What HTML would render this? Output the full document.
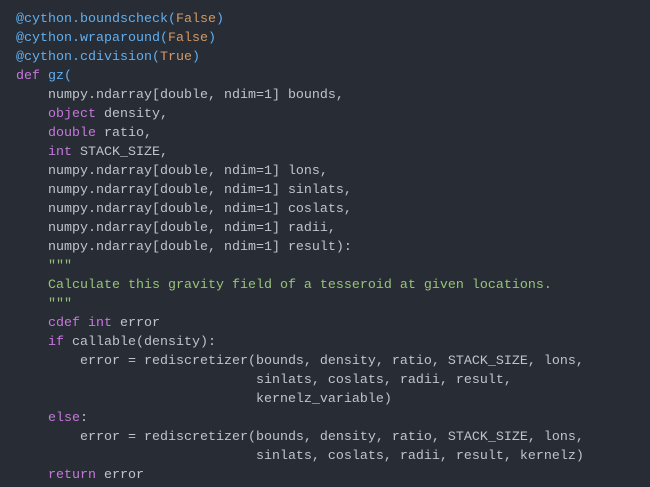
<!DOCTYPE html>
<html><head><style>
html,body{margin:0;padding:0;background:#282c34;width:650px;height:487px;overflow:hidden}
pre{margin:0;padding:10px 0 0 16px;font-family:"Liberation Mono",monospace;font-size:13.33px;line-height:19px;color:#bfc4cc}
.d{color:#61afef}.n{color:#d19a66}.k{color:#c678dd}.s{color:#98c379}.f{color:#61afef}
</style></head><body><pre><span class="d">@cython.boundscheck(</span><span class="n">False</span><span class="d">)</span>
<span class="d">@cython.wraparound(</span><span class="n">False</span><span class="d">)</span>
<span class="d">@cython.cdivision(</span><span class="n">True</span><span class="d">)</span>
<span class="k">def</span> <span class="f">gz(</span>
    numpy.ndarray[double, ndim=1] bounds,
    <span class="k">object</span> density,
    <span class="k">double</span> ratio,
    <span class="k">int</span> STACK_SIZE,
    numpy.ndarray[double, ndim=1] lons,
    numpy.ndarray[double, ndim=1] sinlats,
    numpy.ndarray[double, ndim=1] coslats,
    numpy.ndarray[double, ndim=1] radii,
    numpy.ndarray[double, ndim=1] result):
    <span class="s">"""</span>
<span class="s">    Calculate this gravity field of a tesseroid at given locations.</span>
<span class="s">    """</span>
    <span class="k">cdef</span> <span class="k">int</span> error
    <span class="k">if</span> callable(density):
        error = rediscretizer(bounds, density, ratio, STACK_SIZE, lons,
                              sinlats, coslats, radii, result,
                              kernelz_variable)
    <span class="k">else</span>:
        error = rediscretizer(bounds, density, ratio, STACK_SIZE, lons,
                              sinlats, coslats, radii, result, kernelz)
    <span class="k">return</span> error</pre></body></html>
